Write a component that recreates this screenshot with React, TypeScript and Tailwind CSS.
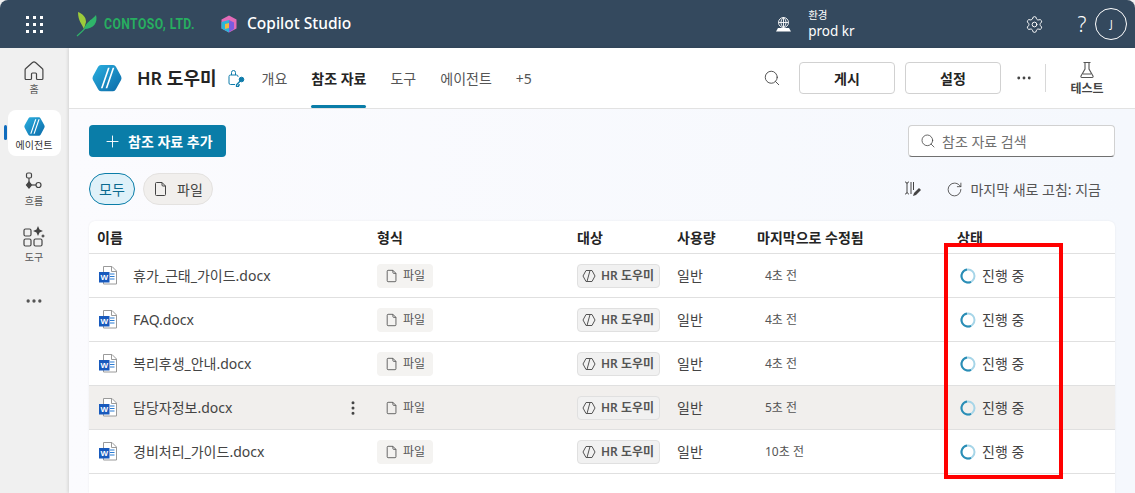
import { MoreVertical, Search, Settings, RotateCw, Plus, MoreHorizontal } from "lucide-react";

const files = [
  { name: "휴가_근태_가이드.docx", time: "4초 전" },
  { name: "FAQ.docx", time: "4초 전" },
  { name: "복리후생_안내.docx", time: "4초 전" },
  { name: "담당자정보.docx", time: "5초 전", hover: true },
  { name: "경비처리_가이드.docx", time: "10초 전" },
];

function AgentLogo({ size }: { size: number }) {
  return (
    <svg width={size} height={size} viewBox="0 0 32 32">
      <defs>
        <linearGradient id="agentg" x1="0" y1="0" x2="1" y2="1">
          <stop offset="0" stopColor="#2bb0e0" />
          <stop offset="1" stopColor="#0b6aa8" />
        </linearGradient>
      </defs>
      <path d="M9.500 2h13q2 0 3 2l5.500 10q1 2 0 4l-5.500 10q-1 2-3 2h-13q-2 0-3-2L1 18q-1-2 0-4L6.500 4q1-2 3-2z" fill="url(#agentg)" />
      <path d="M17 5 9.500 27h1.800L18.800 5zM22 5 14.500 27h1.800L23.800 5z" fill="#fff" />
    </svg>
  );
}

function FileIcon({ className }: { className: string }) {
  return (
    <svg className={className} viewBox="0 0 16 16" fill="none" stroke="currentColor" strokeWidth="1">
      <path d="M3.500 1.500h5.500l3.500 3.500v8.500a1 1 0 0 1-1 1h-8a1 1 0 0 1-1-1v-11a1 1 0 0 1 1-1z" />
      <path d="M9 1.500v2.500a1 1 0 0 0 1 1h2.500" />
    </svg>
  );
}

function WordIcon() {
  return (
    <svg width="19" height="19" viewBox="0 0 19 19">
      <path d="M4.500.5h8.500l4.500 4.500v13h-13z" fill="#fff" stroke="#9a9a9a" />
      <path d="M12.500.5v5h5" fill="none" stroke="#9a9a9a" />
      <path d="M11 8h4.500M11 10.500h4.500M11 13h4.500" stroke="#2b7cd3" strokeWidth="1.200" />
      <rect x="0" y="6" width="10.500" height="10.500" fill="#185abd" />
      <text x="5.200" y="14.200" fontSize="8" fontWeight="700" fill="#fff" textAnchor="middle" fontFamily="Liberation Sans">W</text>
    </svg>
  );
}

function Spinner() {
  return (
    <svg width="16" height="16" viewBox="0 0 16 16" fill="none">
      <circle cx="8" cy="8" r="6.500" stroke="#a6d5e8" strokeWidth="2" />
      <path d="M7 1.600A6.500 6.500 0 0 0 2.500 11.500 6.500 6.500 0 0 0 11 13.800" stroke="#2a8db5" strokeWidth="2" />
    </svg>
  );
}

function Cell({ children, className = "" }: { children: React.ReactNode; className?: string }) {
  return <div className={`flex items-center ${className}`}>{children}</div>;
}

export default function App() {
  return (
    <div className="relative h-[493px] w-[1135px] overflow-hidden bg-[#f0f0f0] font-['Noto_Sans','Noto_Sans_CJK_KR',sans-serif] text-[#242424]">
      {/* Top bar */}
      <header className="flex h-[48px] items-center rounded-t-[8px] bg-[#34495e] text-white">
        <div className="flex w-[68px] justify-center">
          <div className="grid grid-cols-3 gap-[4px]">
            {Array.from({ length: 9 }).map((_, i) => (
              <span key={i} className="h-[3px] w-[3px] bg-white" />
            ))}
          </div>
        </div>
        <svg className="ml-[7px]" width="30" height="26" viewBox="0 0 30 26">
          <path d="M2 25 C8 20 13 15 16 9" stroke="#2fb56a" strokeWidth="1.200" fill="none" />
          <path d="M9 18C7 13 3 10 3 1c5 2 8 5 8 10z" fill="#9ccb3b" />
          <path d="M9 18c2-7 8-9 12-14 2 7-2 14-12 14z" fill="#2fb56a" />
        </svg>
        <span className="ml-[-1px] w-[92px] origin-left scale-x-[0.87] whitespace-nowrap font-['Roboto',sans-serif] text-[14px] font-bold tracking-[0.5px] text-[#27ae60]">CONTOSO, LTD.</span>
        <svg className="ml-[24px]" width="18" height="18" viewBox="0 0 18 18">
          <path d="M9 0.500 16.500 4.500v9L9 17.500 1.500 13.500v-9z" fill="#e36bb8" />
          <path d="M9 5l5 2.500V14l-5 3z" fill="#7a5ce0" />
          <path d="M1.500 7 9 5v12.500l-7.500-4z" fill="#2ab6d9" />
          <path d="M5 9l4-1v5l-4 1z" fill="#f4b740" />
        </svg>
        <span className="ml-[9px] text-[15.500px] font-medium">Copilot Studio</span>
        <svg className="ml-[424px]" width="17" height="17" viewBox="0 0 17 17" fill="none" stroke="#fff" strokeWidth="0.900">
          <circle cx="8.500" cy="6.500" r="5" />
          <path d="M3.500 6.500h10M8.500 1.500v10M6 6.500c0-2 1-4 2.500-5 1.500 1 2.500 3 2.500 5s-1 4-2.500 5c-1.500-1-2.500-3-2.500-5z" />
          <path d="M1 15.500h15l-2-3.500H3z" fill="#fff" stroke="none" />
        </svg>
        <div className="ml-[16px] flex flex-col leading-none">
          <span className="text-[10.500px]">환경</span>
          <span className="mt-[4px] text-[13.500px]">prod kr</span>
        </div>
        <Settings className="ml-[170px] h-[19px] w-[19px]" strokeWidth={1.200} />
        <span className="ml-[34px] text-[21px] font-light leading-none">?</span>
        <div className="ml-[9px] flex h-[32px] w-[32px] items-center justify-center rounded-full border border-white text-[10px]">J</div>
      </header>

      <div className="flex h-[445px]">
        {/* Left rail */}
        <nav className="flex w-[68px] shrink-0 flex-col items-center text-[#555]">
          <svg className="mt-[12px]" width="22" height="22" viewBox="0 0 22 22" fill="none" stroke="#444" strokeWidth="1.200">
            <path d="M9.500 2.500a2.300 2.300 0 0 1 3 0l6.700 6a2 2 0 0 1 .7 1.500v8.500a1 1 0 0 1-1 1h-4.400a1 1 0 0 1-1-1V14a1 1 0 0 0-1-1H9.500a1 1 0 0 0-1 1v4.500a1 1 0 0 1-1 1H3.100a1 1 0 0 1-1-1V10a2 2 0 0 1 .7-1.500z" />
          </svg>
          <span className="text-[10px] leading-[14px]">홈</span>
          <div className="relative mt-[14px] flex h-[46px] w-[53px] flex-col items-center rounded-[8px] bg-white text-[#333]">
            <span className="absolute left-[-4px] top-[15px] h-[15px] w-[3px] rounded bg-[#0f6cbd]" />
            <div className="mt-[6px]"><AgentLogo size={21} /></div>
            <span className="mt-[1px] text-[10px] leading-[14px]">에이전트</span>
          </div>
          <svg className="mt-[16px]" width="20" height="20" viewBox="0 0 20 20" fill="none" stroke="#444" strokeWidth="1.200">
            <rect x="2.500" y="1" width="5" height="5" rx="1.500" />
            <path d="M5 6v4" />
            <path d="M5 10l2.500 3L5 16l-2.500-3z" fill="#444" />
            <path d="M7.500 13H12" />
            <circle cx="14.500" cy="13" r="2.500" />
          </svg>
          <span className="mt-[2px] text-[10px] leading-[14px]">흐름</span>
          <svg className="mt-[18px]" width="22" height="22" viewBox="0 0 22 22" fill="none" stroke="#444" strokeWidth="1.200">
            <rect x="1" y="3" width="7" height="7" rx="1.500" />
            <rect x="1" y="13" width="7" height="7" rx="1.500" />
            <rect x="11" y="13" width="8" height="7" rx="1.500" />
            <path d="M15 0l1.500 3.500L20 5l-3.500 1.500L15 10l-1.500-3.500L10 5l3.500-1.500z" fill="#444" stroke="none" />
            <path d="M20 8l.7 1.300 1.300.7-1.300.7-.7 1.300-.7-1.300-1.300-.7 1.300-.7z" fill="#444" stroke="none" />
          </svg>
          <span className="mt-[2px] text-[10px] leading-[14px]">도구</span>
          <MoreHorizontal className="mt-[27px] h-[20px] w-[20px] text-[#555]" strokeWidth={2} />
        </nav>

        {/* Main */}
        <main className="ml-px flex min-w-0 flex-1 flex-col bg-gradient-to-r from-[#fbfbfe] to-[#f5f8fd] shadow-[-1px_0_3px_rgba(0,0,0,0.12)]">
          <div className="flex h-[61px] shrink-0 items-center border-b border-[#e2e2e2] bg-white pl-[23px]">
            <AgentLogo size={30} />
            <span className="ml-[15px] text-[18px] font-semibold">HR 도우미</span>
            <svg className="ml-[10px]" width="18" height="18" viewBox="0 0 18 18" fill="none" stroke="#0f7cab" strokeWidth="1">
              <path d="M8 15.500H3.500A1.500 1.500 0 0 1 2 14V7.500A1.500 1.500 0 0 1 3.500 6h6A1.500 1.500 0 0 1 11 7.500V8" />
              <path d="M4.500 6V3.500a2 2 0 0 1 4 0V6" />
              <circle cx="14.500" cy="10.500" r="2.300" fill="#0f7cab" />
              <path d="M13 12.200 9.500 15.700v1.600h2l.3-1.500h1.200" strokeWidth="1.300" />
            </svg>
            <div className="ml-[17px] flex h-full items-stretch gap-[24px] text-[14px]">
              <span className="flex items-center text-[#555]">개요</span>
              <span className="relative flex items-center font-semibold">참조 자료
                <span className="absolute inset-x-0 bottom-0 h-[3px] rounded-sm bg-[#0a7da8]" />
              </span>
              <span className="flex items-center text-[#555]">도구</span>
              <span className="flex items-center text-[#555]">에이전트</span>
              <span className="flex items-center text-[#555]">+5</span>
            </div>
            <div className="ml-auto flex items-center pr-[20px]">
              <Search className="h-[18px] w-[18px] text-[#444]" strokeWidth={1.200} />
              <button className="ml-[18px] h-[32px] w-[96px] rounded-[4px] border border-[#d1d1d1] bg-white text-[14px] font-semibold">게시</button>
              <button className="ml-[10px] h-[32px] w-[96px] rounded-[4px] border border-[#d1d1d1] bg-white text-[14px] font-semibold">설정</button>
              <MoreHorizontal className="ml-[14px] h-[18px] w-[18px] text-[#444]" strokeWidth={1.800} />
              <span className="ml-[12px] h-[28px] w-px bg-[#d8d8d8]" />
              <div className="ml-[13px] flex w-[56px] flex-col items-center">
                <svg width="18" height="18" viewBox="0 0 18 18" fill="none" stroke="#555" strokeWidth="1.100">
                  <path d="M5.500 1.500h7M7 1.500v6.500L3 15a1 1 0 0 0 .9 1.500h10.200a1 1 0 0 0 .9-1.500L11 8V1.500M5 13h8" />
                </svg>
                <span className="mt-[2px] text-[12px] font-semibold leading-[15px] text-[#444]">테스트</span>
              </div>
            </div>
          </div>

          <div className="flex min-h-0 flex-1 flex-col px-[20px] pt-[16px]">
            <div className="flex items-center justify-between">
              <button className="flex h-[32px] w-[137px] items-center rounded-[4px] bg-[#0a7da8] pl-[14px] text-[14px] font-semibold text-white">
                <Plus className="h-[19px] w-[19px]" strokeWidth={1.200} />
                <span className="ml-[6px]">참조 자료 추가</span>
              </button>
              <div className="flex h-[32px] w-[207px] items-center rounded-[4px] border border-[#d1d1d1] border-b-[#707070] bg-white pl-[11px] text-[14px] text-[#707070]">
                <Search className="h-[16px] w-[16px] text-[#444]" strokeWidth={1.200} />
                <span className="ml-[6px]">참조 자료 검색</span>
              </div>
            </div>

            <div className="mt-[16px] flex items-center">
              <span className="flex h-[32px] w-[46px] items-center justify-center rounded-full border border-[#0a7da8] bg-[#dff1f9] text-[14px] text-[#0a6a8f]">모두</span>
              <span className="ml-[8px] flex h-[32px] w-[70px] items-center justify-center gap-[8px] rounded-full border border-[#e4e2e0] bg-[#f1efed] text-[14px] text-[#444]">
                <FileIcon className="h-[16px] w-[16px]" />파일
              </span>
              <div className="ml-auto flex items-center pr-[14px] text-[14px] text-[#555]">
                <svg width="18" height="18" viewBox="0 0 18 18" fill="none" stroke="#444" strokeWidth="1">
                  <path d="M1 2c1.500 0 2 1 2 2v8c0 1-.5 2-2 2M5 2c-1.500 0-2 1-2 2M5 14c-1 0-2-1-2-2M7 2v12M9.500 2v8" />
                  <path d="M9 16l1-3 5-5 2 2-5 5z" fill="#444" stroke="none" />
                </svg>
                <RotateCw className="ml-[24px] h-[17px] w-[17px] text-[#444]" strokeWidth={1.200} />
                <span className="ml-[7px]">마지막 새로 고침: 지금</span>
              </div>
            </div>

            {/* Table */}
            <div className="mt-[16px] flex-1 rounded-t-[6px] bg-white text-[14px] shadow-[0_0_2px_rgba(0,0,0,0.08)]">
              <div className="grid h-[33px] grid-cols-[280px_200px_100px_80px_200px_1fr] border-b border-[#e0e0e0] pl-[8px] font-semibold">
                <Cell>이름</Cell>
                <Cell>형식</Cell>
                <Cell>대상</Cell>
                <Cell>사용량</Cell>
                <Cell>마지막으로 수정됨</Cell>
                <Cell>상태</Cell>
              </div>
              {files.map((f) => (
                <div
                  key={f.name}
                  className={`grid h-[44px] grid-cols-[280px_200px_100px_80px_200px_1fr] border-b border-[#e0e0e0] pl-[8px] ${f.hover ? "bg-[#f1efed]" : ""}`}
                >
                  <Cell className="relative pl-[2px] text-[#444]">
                    <WordIcon />
                    <span className="ml-[15px]">{f.name}</span>
                    {f.hover && <MoreVertical className="absolute left-[247px] h-[18px] w-[18px] text-[#444]" strokeWidth={2} />}
                  </Cell>
                  <Cell>
                    <span className={`flex h-[24px] w-[56px] items-center gap-[4px] rounded-[4px] pl-[8px] text-[12px] text-[#555] ${f.hover ? "" : "bg-[#f4f3f1]"}`}>
                      <FileIcon className="h-[14px] w-[14px]" />파일
                    </span>
                  </Cell>
                  <Cell>
                    <span className="flex h-[24px] w-[83px] items-center gap-[5px] whitespace-nowrap rounded-[4px] border border-[#e0e0e0] bg-[#f1f1f1] pl-[4px] text-[12px] font-semibold text-[#555]">
                      <svg width="14" height="14" viewBox="0 0 14 14" fill="none" stroke="#555" strokeWidth="1">
                        <path d="M4 1.500h6L13 7l-3 5.500H4L1 7z" />
                        <path d="M8 1.500 5 12.500" stroke="#555" />
                      </svg>
                      HR 도우미
                    </span>
                  </Cell>
                  <Cell className="text-[#444]">일반</Cell>
                  <Cell className="pl-[8px] text-[12px] text-[#555]">{f.time}</Cell>
                  <Cell className="pl-[3px] text-[#444]">
                    <Spinner />
                    <span className="ml-[6px]">진행 중</span>
                  </Cell>
                </div>
              ))}
            </div>
          </div>
        </main>
      </div>

      {/* Red highlight box */}
      <div className="absolute left-[944px] top-[243px] h-[236px] w-[119px] border-[4px] border-[#ff0000]" />
    </div>
  );
}
